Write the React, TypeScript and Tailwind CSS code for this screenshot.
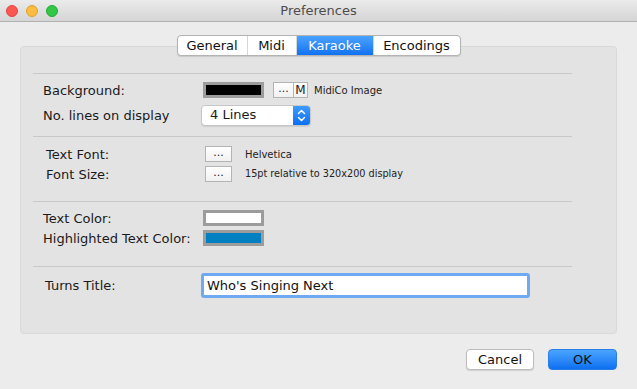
import React from 'react';

const font = { fontFamily: '"DejaVu Sans", Verdana, sans-serif' };

function Tab({ label, active, last }: { label: string; active?: boolean; last?: boolean }) {
  return (
    <div
      className={
        'h-full flex items-center justify-center text-[13px] ' +
        (active
          ? 'bg-gradient-to-b from-[#4aa3ff] to-[#0a6ff0] text-white'
          : 'text-[#111]') +
        (last ? '' : ' border-r border-[#d6d6d6]')
      }
    >
      {label}
    </div>
  );
}

function SmallButton({ children, className = '' }: { children: React.ReactNode; className?: string }) {
  return (
    <div
      className={
        'h-[16px] bg-gradient-to-b from-white to-[#f1f1f1] border border-[#b4b4b4] flex items-center justify-center text-[11px] text-[#222] leading-none ' +
        className
      }
    >
      {children}
    </div>
  );
}

function Swatch({ color }: { color: string }) {
  return (
    <div className="w-[61px] h-[16px] border-[3px] border-[#9c9c9c]" style={{ backgroundColor: color }} />
  );
}

export default function App() {
  return (
    <div className="w-[637px] h-[389px] bg-[#ececec] flex flex-col overflow-hidden" style={font}>
      {/* title bar */}
      <div className="h-[22px] shrink-0 bg-gradient-to-b from-[#ebebeb] to-[#d5d5d5] border-b border-[#b1b1b1] flex items-center relative">
        <div className="flex items-center gap-[8px] pl-[6px]">
          <div className="w-[12px] h-[12px] rounded-full bg-[#fc5753] border border-[#df4744]" />
          <div className="w-[12px] h-[12px] rounded-full bg-[#fdbc40] border border-[#de9f34]" />
          <div className="w-[12px] h-[12px] rounded-full bg-[#33c748] border border-[#27aa35]" />
        </div>
        <div className="flex-1 text-center text-[13px] text-[#4d4d4d] pr-[58px]">Preferences</div>
      </div>

      {/* tabs */}
      <div className="mt-[13px] -mb-[10px] relative z-10 flex justify-center">
        <div className="h-[21px] grid grid-cols-[70px_49px_77px_86px] rounded-[4px] border border-[#b3b3b3] bg-white overflow-hidden shadow-[0_1px_1px_rgba(0,0,0,0.12)]">
          <Tab label="General" />
          <Tab label="Midi" />
          <Tab label="Karaoke" active />
          <Tab label="Encodings" last />
        </div>
      </div>

      {/* group box */}
      <div className="mx-[20px] w-[597px] h-[288px] bg-[#e3e3e3] border border-[#d9d9d9] rounded-[4px] pl-[12px] pt-[26px] text-[13px] text-[#1a1a1a]">
        <div className="w-[539px]">
          {/* section 1 */}
          <div className="border-t border-[#c9c9c9] pt-[8px] pb-[11px] flex flex-col gap-[7px]">
            <div className="h-[16px] flex items-center">
              <div className="w-[170px] pl-[10px] pt-[1px]">Background:</div>
              <Swatch color="#000000" />
              <div className="flex ml-[9px]">
                <SmallButton className="w-[21px] pb-[3px]">...</SmallButton>
                <SmallButton className="w-[14px] border-l-0 text-[12px]">M</SmallButton>
              </div>
              <div className="ml-[6px] text-[10px] text-[#222]">MidiCo Image</div>
            </div>
            <div className="h-[20px] flex items-center">
              <div className="w-[168px] pl-[10px] pt-[1px]">No. lines on display</div>
              <div className="w-[110px] h-[21px] bg-white rounded-[4px] border border-[#c6c6c6] shadow-[0_1px_1px_rgba(0,0,0,0.1)] flex items-center overflow-hidden">
                <div className="flex-1 pl-[8px]">4 Lines</div>
                <div className="w-[17px] h-full bg-gradient-to-b from-[#3c9bff] to-[#0a6ff0] flex items-center justify-center">
                  <svg width="9" height="13" viewBox="0 0 9 13" fill="none" stroke="white" strokeWidth="1.5" strokeLinecap="round" strokeLinejoin="round">
                    <path d="M1.5 4.5 L4.5 1.5 L7.5 4.5" />
                    <path d="M1.5 8.5 L4.5 11.5 L7.5 8.5" />
                  </svg>
                </div>
              </div>
            </div>
          </div>

          {/* section 2 */}
          <div className="border-t border-[#c9c9c9] pt-[9px] pb-[19px] flex flex-col gap-[4px]">
            <div className="h-[16px] flex items-center">
              <div className="w-[172px] pl-[13px] pt-[1px]">Text Font:</div>
              <SmallButton className="w-[27px] pb-[3px]">...</SmallButton>
              <div className="ml-[13px] text-[10px] text-[#222]">Helvetica</div>
            </div>
            <div className="h-[16px] flex items-center">
              <div className="w-[172px] pl-[13px] pt-[1px]">Font Size:</div>
              <SmallButton className="w-[27px] pb-[3px]">...</SmallButton>
              <div className="ml-[13px] text-[9.7px] text-[#222]">15pt relative to 320x200 display</div>
            </div>
          </div>

          {/* section 3 */}
          <div className="border-t border-[#c9c9c9] pt-[8px] pb-[20px] flex flex-col gap-[4px]">
            <div className="h-[16px] flex items-center">
              <div className="w-[170px] pl-[10px] pt-[1px]">Text Color:</div>
              <Swatch color="#ffffff" />
            </div>
            <div className="h-[16px] flex items-center">
              <div className="w-[170px] pl-[10px] pt-[1px]">Highlighted Text Color:</div>
              <Swatch color="#0080c0" />
            </div>
          </div>

          {/* section 4 */}
          <div className="border-t border-[#c9c9c9] pt-[6px]">
            <div className="h-[25px] flex items-center">
              <div className="w-[168px] pl-[12px]">Turns Title:</div>
              <div className="w-[329px] h-[25px] rounded-[3px] border-[3px] border-[#6ea9f2] bg-white flex items-center pl-[3px]">
                <span className="text-[#111]">Who's Singing Next</span>
              </div>
            </div>
          </div>
        </div>
      </div>

      {/* footer buttons */}
      <div className="flex justify-end gap-[14px] pr-[20px] mt-[15px] text-[13px]">
        <div className="w-[68px] h-[21px] bg-white border border-[#bcbcbc] rounded-[4px] shadow-[0_1px_1px_rgba(0,0,0,0.12)] flex items-center justify-center text-[#111]">
          Cancel
        </div>
        <div className="w-[69px] h-[21px] bg-gradient-to-b from-[#4aa5ff] to-[#0b6ff0] border border-[#2a7ee8] rounded-[4px] flex items-center justify-center text-[#111]">
          OK
        </div>
      </div>
    </div>
  );
}
